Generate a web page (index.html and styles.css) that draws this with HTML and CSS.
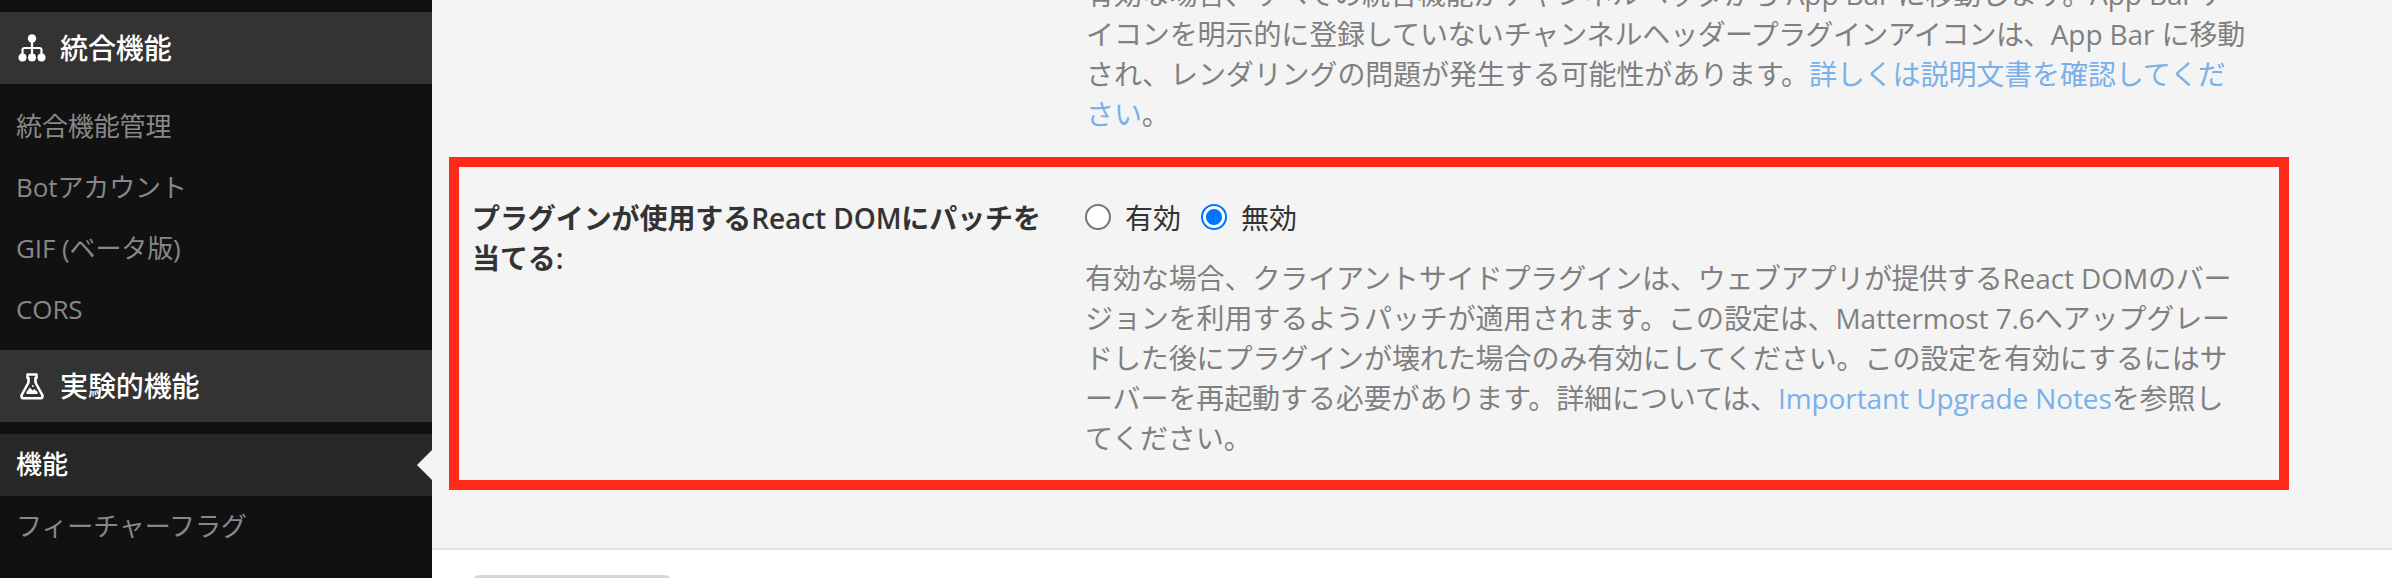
FILE: index.html
```html
<!DOCTYPE html>
<html lang="ja">
<head>
<meta charset="utf-8">
<title>System Console</title>
<link rel="stylesheet" href="styles.css">
</head>
<body>
<div class="console">
  <nav class="sidebar">
    <div class="category">
      <svg class="icon" viewBox="0 0 28 28"><g fill="#fff"><circle cx="14" cy="4.500" r="4.200"/><circle cx="4.500" cy="23.500" r="4"/><circle cx="14" cy="23.500" r="4"/><circle cx="23.500" cy="23.500" r="4"/></g><path d="M14 6V22M4.500 22V16Q4.500 14 6.500 14H21.500Q23.500 14 23.500 16V22" fill="none" stroke="#fff" stroke-width="2.200"/></svg>
      <span>統合機能</span>
    </div>
    <ul class="links">
      <li>統合機能管理</li>
      <li>Botアカウント</li>
      <li>GIF (ベータ版)</li>
      <li>CORS</li>
    </ul>
    <div class="category">
      <svg class="icon" viewBox="0 0 28 28"><path d="M9.500 2.500H18.500V6H17.500V10.500L24.300 23Q25.300 26.300 22.500 26.300H5.500Q2.700 26.300 3.700 23L10.500 10.500V6H9.500Z" fill="none" stroke="#fff" stroke-width="2.600" stroke-linejoin="round"/><path d="M8.500 22V20L12 15.500L14.500 18.500L16.500 17L19.500 20V22Z" fill="#fff"/><circle cx="14.800" cy="14" r="1" fill="#fff"/></svg>
      <span>実験的機能</span>
    </div>
    <ul class="links">
      <li class="active">機能</li>
      <li>フィーチャーフラグ</li>
      <li>Bleve</li>
    </ul>
  </nav>
  <main class="content">
    <section class="settings">
      <p class="help previous">有効な場合、すべての統合機能がチャンネルヘッダから App Bar に移動します。App Bar ア<br>イコンを明示的に登録していないチャンネルヘ<span class="kern-wide">ッダープラグインアイコンは、</span>App Bar に移動<br>され、レンダリングの問題が発生する可能性があります。<a>詳しくは説明文書を確認してくだ<br>さい</a>。</p>
      <div class="highlight">
        <div class="label">プラグインが使用するReact DOMにパッチを<br>当てる:</div>
        <div class="field">
          <div class="options">
            <label><i class="radio"></i>有効</label>
            <label><i class="radio checked"></i>無効</label>
          </div>
          <p class="help">有効な場合、クライアントサイドプラグインは、<span class="kern">ウェブアプリが提供する</span>React DOM<span class="kern">のバー</span><br>ジョンを利用するようパッチが適用されます。この設定は、Mattermost 7.6へアップグレー<br>ドした後にプラグインが壊れた場合のみ有効にしてください。この設定を有効にするにはサ<br>ーバーを再起動する必要があります。詳細については、<a>Important Upgrade Notes</a>を参照し<br>てください。</p>
        </div>
      </div>
    </section>
    <footer class="footer"><div class="save"></div></footer>
  </main>
</div>
</body>
</html>
```
FILE: styles.css
```css
* { box-sizing: border-box; }
body {
  margin: 0;
  height: 578px;
  overflow: hidden;
  font: 28px/40px "Open Sans", "Noto Sans CJK JP", sans-serif;
  color: #333;
}
.console { display: flex; height: 578px; overflow: hidden; }
.sidebar {
  width: 432px;
  flex: none;
  padding-top: 12px;
  background: #111;
  white-space: nowrap;
}
.category {
  display: flex;
  align-items: center;
  gap: 14px;
  height: 72px;
  padding-left: 18px;
  background: #333;
  color: #fff;
  font-weight: 500;
  letter-spacing: -0.1px;
}
.icon { width: 28px; height: 28px; flex: none; }
.links {
  list-style: none;
  margin: 0;
  padding: 12px 0 10px;
  font-size: 26px;
  letter-spacing: -0.1px;
  color: #888;
}
.links li { height: 61px; padding-left: 16px; line-height: 61px; }
.links .active {
  position: relative;
  height: 62px;
  background: #282828;
  color: #fff;
  font-weight: 500;
}
.active::after {
  content: "";
  position: absolute;
  right: 0;
  top: 16px;
  border: solid transparent;
  border-width: 15px 15px 15px 0;
  border-right-color: #f4f4f4;
}
.content { flex: 1; display: flex; flex-direction: column; background: #f4f4f4; }
.settings { height: 548px; flex: none; white-space: nowrap; }
.help { margin: 0; color: #808080; letter-spacing: -0.1px; }
.help a { color: #7ab0ea; }
.kern { letter-spacing: -0.3px; }
.kern-wide { letter-spacing: -0.6px; }
.previous { margin: -26px 0 23px 654px; height: 160px; }
.highlight {
  display: flex;
  width: 1840px;
  height: 333px;
  margin-left: 17px;
  padding: 31px 0 0 13px;
  border: 10px solid #ff2a1a;
}
.label { width: 613px; flex: none; font-weight: 600; letter-spacing: -0.08px; }
.options { display: flex; gap: 20px; height: 60px; }
.options label { display: flex; gap: 14px; height: 40px; }
.radio {
  width: 26px;
  height: 26px;
  margin-top: 6px;
  border: 2px solid #767676;
  border-radius: 50%;
  background: #fff;
}
.checked { border-color: #0075ff; background: radial-gradient(circle, #0075ff 7.500px, #fff 8.500px); }
.footer { flex: 1; padding: 25px 0 0 40px; background: #fff; border-top: 2px solid #e0e0e0; }
.save { width: 200px; height: 60px; border-radius: 8px; background: #d6d6d6; }
```
